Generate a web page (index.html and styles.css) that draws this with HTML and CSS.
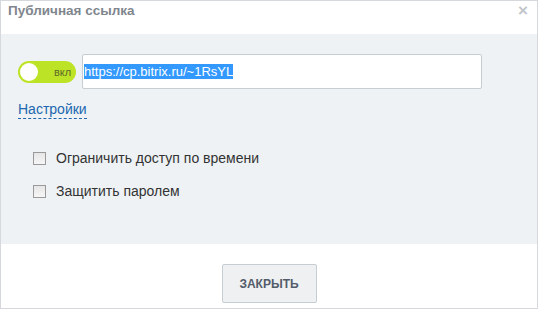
FILE: index.html
```html
<!DOCTYPE html>
<html lang="ru">
<head>
    <meta charset="UTF-8">
    <title>Публичная ссылка</title>
    <link rel="stylesheet" href="styles.css">
</head>
<body>
    <div class="popup">
        <div class="popup-head">
            <span class="popup-title">Публичная ссылка</span>
            <span class="popup-close">&#215;</span>
        </div>
        <div class="popup-body">
            <div class="link-row">
                <div class="switch">
                    <span class="switch-knob"></span>
                    <span class="switch-text">вкл</span>
                </div>
                <div class="link-input"><span class="selected">https://cp.bitrix.ru/~1RsYL</span></div>
            </div>
            <a class="settings" href="#">Настройки</a>
            <label class="check"><span class="box"></span>Ограничить доступ по времени</label>
            <label class="check"><span class="box"></span>Защитить паролем</label>
        </div>
        <div class="popup-foot">
            <button class="btn">ЗАКРЫТЬ</button>
        </div>
    </div>
</body>
</html>
```

FILE: styles.css
```css
body {
    margin: 0;
    font-family: "Liberation Sans", Arial, sans-serif;
    background-color: #fff;
}
.popup {
    width: 536px;
    height: 307px;
    border: 1px solid #d5d8dc;
    display: flex;
    flex-direction: column;
}
.popup-head {
    height: 33px;
    display: flex;
    justify-content: space-between;
    padding: 0 9px 0 7px;
}
.popup-title {
    font-size: 13.5px;
    font-weight: bold;
    color: #80868e;
    line-height: 20px;
}
.popup-close {
    font-size: 17px;
    font-weight: bold;
    color: #c2c5c9;
    line-height: 20px;
}
.popup-body {
    background-color: #eef2f4;
    height: 210px;
    padding: 20px 0 0 17px;
    box-sizing: border-box;
}
.link-row {
    display: flex;
    align-items: center;
    gap: 6px;
}
.switch {
    width: 58px;
    height: 22px;
    border-radius: 11px;
    background-color: #bde326;
    display: flex;
    align-items: center;
    box-sizing: border-box;
    padding: 0 2px;
}
.switch-knob {
    width: 18px;
    height: 18px;
    border-radius: 50%;
    background-color: #fff;
}
.switch-text {
    font-size: 11px;
    color: #5f6b2c;
    margin-left: 16px;
}
.link-input {
    width: 397px;
    height: 33px;
    border: 1px solid #c6cdd3;
    border-radius: 2px;
    background-color: #fff;
    display: flex;
    align-items: center;
    padding-left: 1px;
}
.selected {
    background-color: #3399ff;
    color: #fff;
    font-size: 13px;
    line-height: 15px;
}
.settings {
    display: inline-block;
    margin-top: 12px;
    font-size: 14px;
    color: #2067b0;
    text-decoration: none;
    border-bottom: 1px dashed #2067b0;
    line-height: 17px;
}
.check {
    display: flex;
    align-items: center;
    font-size: 14px;
    color: #333;
    margin-left: 15px;
    height: 18px;
}
.settings + .check {
    margin-top: 30px;
}
.check + .check {
    margin-top: 15px;
}
.box {
    width: 11px;
    height: 11px;
    border: 1px solid #9a9a9a;
    background: linear-gradient(#e6e6e6, #f6f6f6);
    margin-right: 10px;
}
.popup-foot {
    flex: 1;
    display: flex;
    justify-content: center;
    padding-top: 20px;
}
.btn {
    width: 95px;
    height: 39px;
    background-color: #eef0f2;
    border: 1px solid #c6cdd3;
    border-radius: 2px;
    font-family: "Liberation Sans", Arial, sans-serif;
    font-size: 12px;
    font-weight: bold;
    color: #535c69;
}
```
